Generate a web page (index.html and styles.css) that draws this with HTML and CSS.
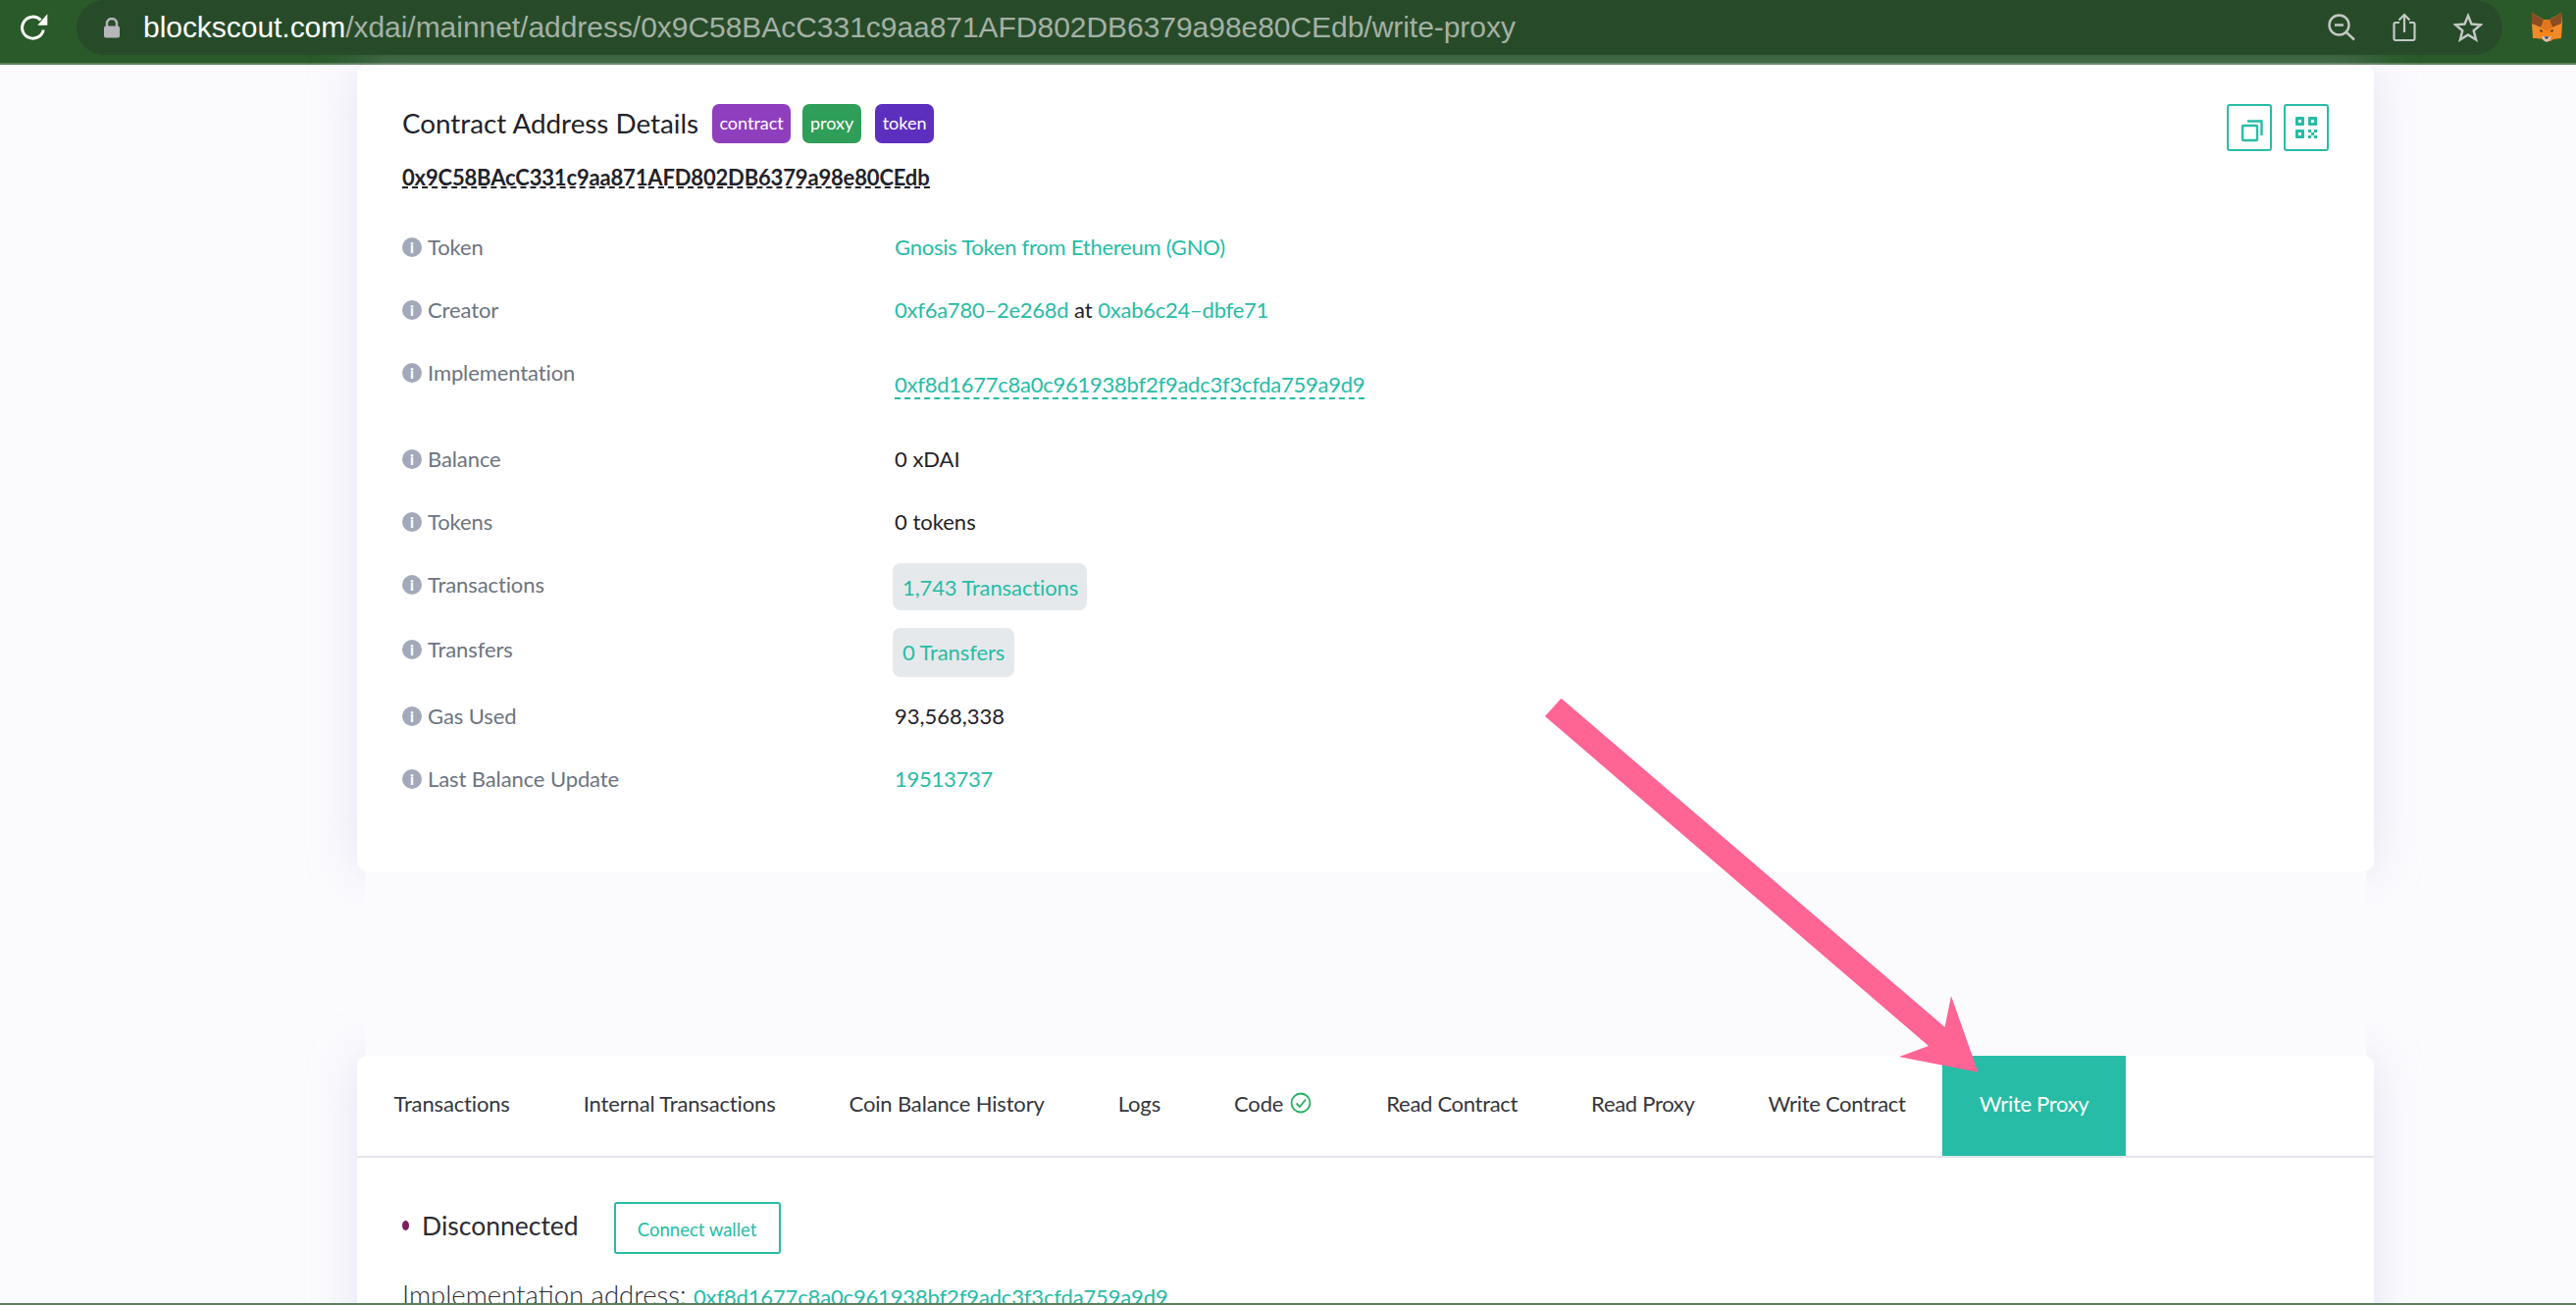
FILE: index.html
```html
<!DOCTYPE html>
<html lang="en">
<head>
<meta charset="utf-8">
<title>Contract Address Details</title>
<link rel="stylesheet" href="styles.css">
</head>
<body>
<header class="toolbar">
  <svg class="reload" width="30" height="30" viewBox="0 0 30 30"><path d="M21.500 7.500A11 11 0 1 0 24.300 17.500" fill="none" stroke="#fff" stroke-width="3"/><path d="M18.300 12.700H28.300V1.300z" fill="#fff"/></svg>
  <div class="omnibox">
    <svg class="lock" width="18" height="21" viewBox="0 0 18 21"><path d="M4 9V6a5 5 0 0 1 10 0v3" fill="none" stroke="#b5b7bb" stroke-width="2.400"/><rect x="1" y="8.500" width="16" height="12" rx="2" fill="#b5b7bb"/></svg>
    <div class="url"><span class="host">blockscout.com</span>/xdai/mainnet/address/0x9C58BAcC331c9aa871AFD802DB6379a98e80CEdb/write-proxy</div>
    <div class="omni-icons">
      <svg width="28" height="28" viewBox="0 0 28 28" fill="none" stroke="#c4c8c4" stroke-width="2.400"><circle cx="11.500" cy="11.500" r="10"/><path d="M7 11.500h9M19 19l8 7.500"/></svg>
      <svg width="24" height="30" viewBox="0 0 24 30" fill="none" stroke="#c4c8c4" stroke-width="2.200"><path d="M7 10H3a1.500 1.500 0 0 0-1.500 1.500v15A1.500 1.500 0 0 0 3 28h18a1.500 1.500 0 0 0 1.500-1.500v-15A1.500 1.500 0 0 0 21 10h-4M12 20V2M6.500 7.500 12 2l5.500 5.500"/></svg>
      <svg width="30" height="30" viewBox="0 0 30 30" fill="none" stroke="#c4c8c4" stroke-width="2.400"><path d="M15 3l3.500 8.500 9.500.7-7.300 6 2.400 9.300L15 22.500l-8.100 5 2.400-9.300-7.300-6 9.500-.7z"/></svg>
    </div>
  </div>
  <svg class="fox" width="32" height="30" viewBox="0 0 32 30"><path d="M1 0l12 7h6l12-7 1 11-1 15-8 1-3 2h-4l-3-2-8-1-1-15z" fill="#f6851b"/><path d="M1 0l12 7.500-3 7.500-9-4zM31 0 19 7.500l3 7.500 9-4z" fill="#8a4d22"/><path d="M10 15l3-7.500h6l3 7.500-4 3h-4z" fill="#e2761b"/><path d="M1 11l9 4-1 11-7 0zM31 11l-9 4 1 11 7 0z" fill="#f08a2a"/><path d="M11 24h10l-1.500 4-3.500 2-3.500-2z" fill="#d7c1b3"/><path d="M13.500 24.500h5l-2.500 2.500z" fill="#233447"/><path d="M9 17l3.500 1.500-2.500 1.500zM23 17l-3.500 1.500 2.500 1.500z" fill="#4a3320"/></svg>
</header>

<main class="page">
  <section class="card details">
    <div class="title-row">
      <h1 class="title">Contract Address Details</h1>
      <span class="badge badge-contract">contract</span>
      <span class="badge badge-proxy">proxy</span>
      <span class="badge badge-token">token</span>
      <div class="actions">
        <button class="icon-btn icon-btn-copy"><svg width="24" height="24" viewBox="0 0 24 24" fill="none" stroke="#27bca6" stroke-width="2.400"><rect x="2" y="7" width="15" height="15" rx="1"/><path d="M7 2.500h14.500V17"/></svg></button>
        <button class="icon-btn"><svg width="22" height="22" viewBox="0 0 22 22" fill="#27bca6"><path fill-rule="evenodd" d="M0 1a1 1 0 0 1 1-1h7a1 1 0 0 1 1 1v7a1 1 0 0 1-1 1H1a1 1 0 0 1-1-1zM3 3v3h3V3zM13 1a1 1 0 0 1 1-1h7a1 1 0 0 1 1 1v7a1 1 0 0 1-1 1h-7a1 1 0 0 1-1-1zM16 3v3h3V3zM0 14a1 1 0 0 1 1-1h7a1 1 0 0 1 1 1v7a1 1 0 0 1-1 1H1a1 1 0 0 1-1-1zM3 16v3h3v-3z"/><path d="M13 13h3v3h-3zM19 13h3v3h-3zM16 16h3v3h-3zM13 19h3v3h-3zM19 19h3v3h-3z"/></svg></button>
      </div>
    </div>
    <div class="address">0x9C58BAcC331c9aa871AFD802DB6379a98e80CEdb</div>
    <div class="rows">
      <div class="row"><div class="label"><span class="info">i</span>Token</div><div class="value"><a class="link">Gnosis Token from Ethereum (GNO)</a></div></div>
      <div class="row"><div class="label"><span class="info">i</span>Creator</div><div class="value"><a class="link">0xf6a780–2e268d</a> at <a class="link">0xab6c24–dbfe71</a></div></div>
      <div class="row row-impl"><div class="label"><span class="info">i</span>Implementation</div><div class="value value-impl"><a class="link dashed">0xf8d1677c8a0c961938bf2f9adc3f3cfda759a9d9</a></div></div>
      <div class="row"><div class="label"><span class="info">i</span>Balance</div><div class="value">0 xDAI</div></div>
      <div class="row row-tight"><div class="label"><span class="info">i</span>Tokens</div><div class="value">0 tokens</div></div>
      <div class="row row-pill"><div class="label label-pill"><span class="info">i</span>Transactions</div><div class="value"><a class="pill pill-tx">1,743 Transactions</a></div></div>
      <div class="row row-pill"><div class="label label-pill"><span class="info">i</span>Transfers</div><div class="value"><a class="pill pill-tr">0 Transfers</a></div></div>
      <div class="row"><div class="label"><span class="info">i</span>Gas Used</div><div class="value">93,568,338</div></div>
      <div class="row"><div class="label"><span class="info">i</span>Last Balance Update</div><div class="value"><a class="link">19513737</a></div></div>
    </div>
  </section>

  <div class="band"></div>

  <section class="card write">
    <nav class="tabs">
      <a class="tab">Transactions</a>
      <a class="tab">Internal Transactions</a>
      <a class="tab">Coin Balance History</a>
      <a class="tab">Logs</a>
      <a class="tab tab-code">Code<svg class="check" width="22" height="22" viewBox="0 0 22 22" fill="none" stroke="#27ae60" stroke-width="1.800"><circle cx="11" cy="11" r="9.500"/><path d="M6.500 11.500l3.500 3.500 6-7.500"/></svg></a>
      <a class="tab tab-tight">Read Contract</a>
      <a class="tab tab-tight">Read Proxy</a>
      <a class="tab tab-tight">Write Contract</a>
      <a class="tab tab-tight tab-active">Write Proxy</a>
    </nav>
    <div class="write-body">
      <div class="wallet">
        <span class="dot"></span>
        <span class="status">Disconnected</span>
        <button class="connect">Connect wallet</button>
      </div>
      <div class="impl-line">Implementation address: <a class="link impl-link">0xf8d1677c8a0c961938bf2f9adc3f3cfda759a9d9</a></div>
    </div>
  </section>
</main>

<div class="bottom-edge"></div>

<svg class="arrow" width="2626" height="1330" viewBox="0 0 2626 1330"><polygon points="1591.500,711.700 1982.600,1046.700 1989,1015 2016.500,1092.700 1936,1077 1966,1066 1575,730" fill="#fe6494"/></svg>
</body>
</html>
```
FILE: styles.css
```css
* { box-sizing: border-box; }
html, body { margin: 0; height: 1330px; overflow: hidden; }
body {
  background: #fbfbfe;
  font-family: "Lato", "Noto Sans", sans-serif;
  font-size: 22px;
  color: #1f2229;
}
a { text-decoration: none; }

/* browser chrome */
.toolbar {
  height: 66px;
  background: #2a5a2a;
  border-bottom: 2px solid #5c7f5c;
  display: flex;
  align-items: flex-start;
  padding-left: 20px;
}
.reload { margin-top: 13px; flex: none; }
.omnibox {
  width: 2473px;
  height: 56px;
  margin-left: 28px;
  margin-right: 29px;
  background: #274b29;
  border-radius: 28px;
  display: flex;
  align-items: center;
  padding-left: 27px;
  flex: none;
}
.lock { flex: none; }
.url {
  margin-left: 23px;
  font-family: "Liberation Sans", sans-serif;
  font-size: 30px;
  letter-spacing: -.04px;
  color: #a5b0a5;
  white-space: nowrap;
}
.host { color: #fff; }
.omni-icons {
  margin-left: auto;
  padding-right: 20px;
  display: flex;
  gap: 38px;
  align-items: center;
}
.fox { flex: none; margin-top: 13px; }

/* page */
.page { margin-left: 364px; width: 2056px; }
.card {
  background: #fff;
  border-radius: 10px;
  box-shadow: 0 0 50px rgba(190, 185, 225, .35);
}
.details { height: 822px; padding: 40px 46px 0; }
.band {
  position: relative;
  height: 188px;
  margin: 0 8px;
  background: #fbfbfe;
}
.title-row { display: flex; align-items: flex-start; height: 48px; }
.title {
  margin: 0 14px 0 0;
  font-size: 27.800px;
  font-weight: 400;
  line-height: 40px;
}
.badge {
  height: 40px;
  line-height: 38px;
  margin-right: 12px;
  border-radius: 7px;
  color: #fff;
  font-size: 18px;
  text-align: center;
}
.badge-contract { background: #8f3fbd; width: 80px; }
.badge-proxy { background: #2f9e58; width: 60px; margin-right: 14px; }
.badge-token { background: #5c2fbf; width: 60px; }
.actions { margin-left: auto; display: flex; gap: 12px; }
.icon-btn {
  width: 46px;
  height: 48px;
  padding: 0;
  background: #fff;
  border: 2px solid #27bca6;
  border-radius: 3px;
  display: flex;
  align-items: center;
  justify-content: center;
}
.icon-btn-copy { padding: 6px 0 0 5px; }
.address {
  margin-top: 17px;
  font-weight: 700;
  font-size: 22px;
  letter-spacing: -.16px;
  line-height: 19px;
  width: max-content;
  border-bottom: 2px dashed #1f2229;
}
.rows { margin-top: 45px; }
.row {
  display: grid;
  grid-template-columns: 502px 1fr;
  align-items: start;
  line-height: 30px;
  margin-bottom: 34px;
}
.row-impl { margin-bottom: 46px; }
.row-tight { margin-bottom: 27px; }
.row-pill { margin-bottom: 0; }
.label { color: #6c7480; display: flex; align-items: center; letter-spacing: -.1px; }
.label-pill { margin-top: 7px; }
.info {
  width: 20px;
  height: 20px;
  border-radius: 50%;
  background: #a3a9b8;
  color: #fff;
  font-size: 15px;
  font-weight: 900;
  line-height: 20px;
  text-align: center;
  margin-right: 6px;
  flex: none;
}
.value-impl { margin-top: 12px; }
.link { color: #27bca6; letter-spacing: -.25px; }
.dashed { border-bottom: 2px dashed #27bca6; }
.pill {
  display: block;
  margin-left: -2px;
  padding: 0 10px;
  background: #e6e9ec;
  border-radius: 8px;
  color: #27bca6;
  white-space: nowrap;
  letter-spacing: -.1px;
}
.pill-tx { height: 48px; line-height: 50px; margin-bottom: 18px; width: 198px; }
.pill-tr { height: 50px; line-height: 50px; margin-bottom: 25px; width: 124px; }

/* tabs */
.write { height: 400px; }
.tabs {
  height: 104px;
  display: flex;
  border-bottom: 2px solid #e2e5ec;
}
.tab {
  height: 102px;
  padding: 0 37.500px 6px;
  display: flex;
  align-items: center;
  font-size: 22px;
  letter-spacing: -.15px;
  color: #33363c;
}
.tab-code { padding-right: 38.500px; }
.tab-tight { letter-spacing: -.3px; }
.check { margin-left: 7px; }
.tab-active { background: #27bca6; color: #fff; }
.write-body { padding: 45px 46px 0; }
.wallet { display: flex; align-items: center; height: 53px; }
.dot {
  width: 7px;
  height: 10px;
  border-radius: 50%;
  background: #7d1d61;
  margin: 0 13px 6px 0;
}
.status { font-size: 26.500px; color: #2a2d33; margin-bottom: 6px; }
.connect {
  margin-left: 36px;
  width: 170px;
  height: 53px;
  background: #fff;
  border: 2px solid #27bca6;
  border-radius: 3px;
  color: #27bca6;
  font-family: inherit;
  font-size: 18.500px;
  padding: 2px 0 0;
}
.impl-line {
  margin-top: 24px;
  font-size: 27.500px;
  font-weight: 300;
  line-height: 36px;
  color: #2a2d33;
}
.impl-link { font-size: 22px; font-weight: 400; letter-spacing: -.15px; }

/* overlays */
.bottom-edge {
  position: fixed;
  left: 0;
  right: 0;
  bottom: 0;
  height: 2px;
  background: #5c7f5c;
}
.arrow { position: fixed; left: 0; top: 0; pointer-events: none; }
```
